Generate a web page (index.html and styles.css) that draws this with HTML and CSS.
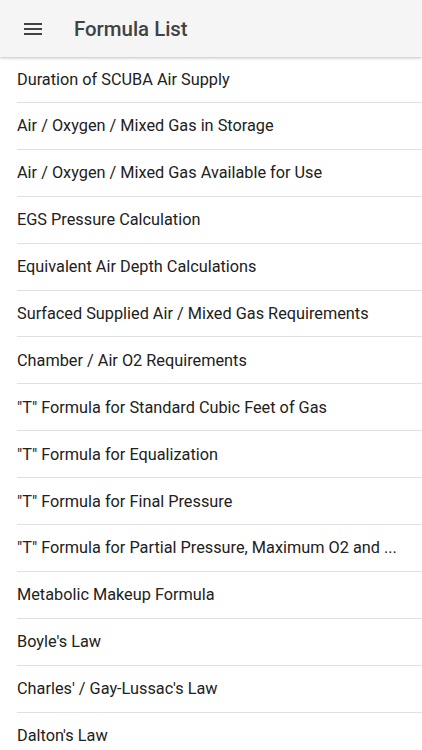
FILE: index.html
```html
<!DOCTYPE html>
<html>
<head>
<meta charset="utf-8">
<link rel="stylesheet" href="styles.css">
</head>
<body>
<header class="appbar">
  <svg class="menu" viewBox="0 0 24 24" width="24" height="24"><path d="M3 6h18v2H3zM3 11h18v2H3zM3 16h18v2H3z" fill="#424242"/></svg>
  <h1 class="title">Formula List</h1>
</header>
<ul class="list">
  <li class="item">Duration of SCUBA Air Supply</li>
  <li class="item">Air / Oxygen / Mixed Gas in Storage</li>
  <li class="item">Air / Oxygen / Mixed Gas Available for Use</li>
  <li class="item">EGS Pressure Calculation</li>
  <li class="item">Equivalent Air Depth Calculations</li>
  <li class="item">Surfaced Supplied Air / Mixed Gas Requirements</li>
  <li class="item">Chamber / Air O2 Requirements</li>
  <li class="item">"T" Formula for Standard Cubic Feet of Gas</li>
  <li class="item">"T" Formula for Equalization</li>
  <li class="item">"T" Formula for Final Pressure</li>
  <li class="item">"T" Formula for Partial Pressure, Maximum O2 and ...</li>
  <li class="item">Metabolic Makeup Formula</li>
  <li class="item">Boyle's Law</li>
  <li class="item">Charles' / Gay-Lussac's Law</li>
  <li class="item">Dalton's Law</li>
</ul>
</body>
</html>
```
FILE: styles.css
```css
html, body {
  margin: 0;
  padding: 0;
  background: #ffffff;
  font-family: Roboto, "Noto Sans", sans-serif;
  overflow: hidden;
}
.appbar {
  position: relative;
  z-index: 1;
  height: 57px;
  background: #f5f5f5;
  display: flex;
  align-items: center;
  box-shadow: 0 1px 3px rgba(0,0,0,0.25);
}
.menu {
  margin-left: 21px;
  margin-right: 29px;
  flex: none;
}
.title {
  margin: 0;
  font-size: 20.4px;
  font-weight: 500;
  color: #424242;
}
.list {
  list-style: none;
  margin: 0;
  padding: 0;
}
.item {
  height: 45.9px;
  display: flex;
  align-items: center;
  margin-left: 17px;
  border-bottom: 1px solid #e0e0e0;
  font-size: 16.3px;
  color: #212121;
  white-space: nowrap;
}
.item:first-child {
  height: 45px;
}
```
